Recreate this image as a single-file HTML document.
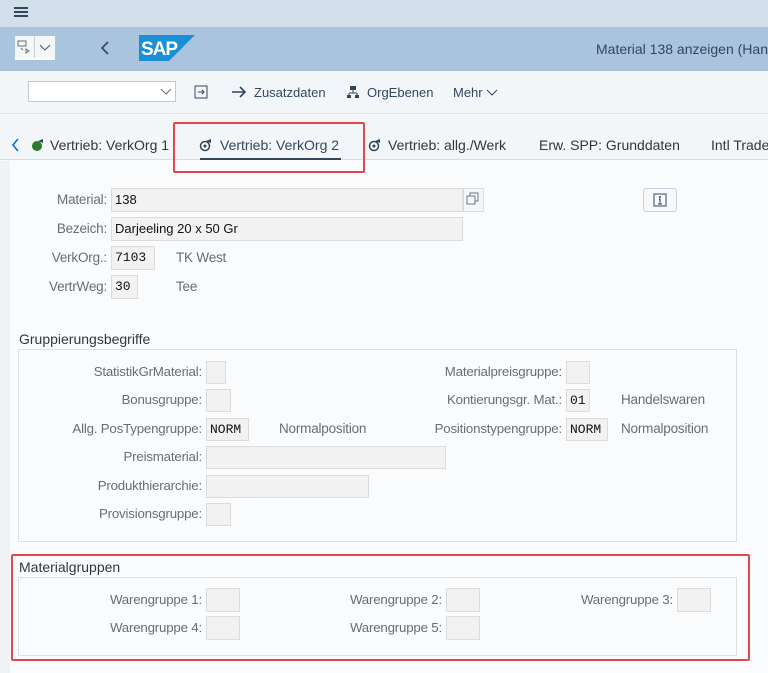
<!DOCTYPE html>
<html><head><meta charset="utf-8"><style>
*{box-sizing:border-box;margin:0;padding:0}
body{width:768px;height:673px;overflow:hidden;background:#fafbfd;font-family:"Liberation Sans",sans-serif;position:relative;color:#32363a}
.a{position:absolute;white-space:nowrap}
.lbl{position:absolute;font-size:13.3px;color:#6a6d70;text-align:right;letter-spacing:-0.2px;white-space:nowrap}
.top{font-size:13.5px;letter-spacing:-0.2px}
.in{position:absolute;background:#f2f2f2;border:1px solid #dcdcdc;font-family:"Liberation Mono",monospace;font-size:13px;color:#111;padding-left:3px;line-height:22px}
.txt{position:absolute;font-size:13.5px;color:#6a6d70;letter-spacing:-0.2px;white-space:nowrap}
</style></head><body>
<div class="a" style="left:0;top:0;width:768px;height:27px;background:#d2deea"></div>
<div class="a" style="left:14px;top:7px;width:14px;height:2px;background:#32475e;box-shadow:0 4px 0 #32475e,0 8px 0 #32475e"></div>
<div class="a" style="left:0;top:27px;width:768px;height:44px;background:#a9c4dc"></div>
<div class="a" style="left:15px;top:36px;width:40px;height:24px;background:#f4f6f8;border-bottom:2px solid #fff"></div>
<div class="a" style="left:34px;top:36px;width:1px;height:22px;background:#c8d0d8"></div>
<svg class="a" style="left:17px;top:40px" width="16" height="16"><rect x="1" y="1" width="8" height="5" fill="none" stroke="#6a6d70"/><path d="M4 8l2 2M9 9l3 2-3 2z" stroke="#6a6d70" fill="none"/></svg>
<svg class="a" style="left:39px;top:44px" width="12" height="8"><path d="M1 1l5 5 5-5" stroke="#556" fill="none"/></svg>
<svg class="a" style="left:100px;top:41px" width="10" height="14"><path d="M8 1L2 7l6 6" stroke="#32475e" stroke-width="1.6" fill="none"/></svg>
<svg class="a" style="left:139px;top:35px" width="56" height="26"><polygon points="0,0 56,0 30,26 0,26" fill="#1a8fd6"/><text x="2" y="20" font-family="Liberation Sans" font-weight="bold" font-size="19" fill="#fff" letter-spacing="-1">SAP</text></svg>
<div class="a" style="left:596px;top:41px;font-size:14px;color:#32475e">Material 138 anzeigen (Han</div>
<div class="a" style="left:0;top:71px;width:768px;height:43px;background:#f3f6f9;border-bottom:1px solid #dde2e8"></div>
<div class="a" style="left:28px;top:81px;width:148px;height:21px;background:#fff;border:1px solid #c4c9ce"></div>
<svg class="a" style="left:160px;top:88px" width="12" height="8"><path d="M1 1l5 5 5-5" stroke="#6a6d70" fill="none"/></svg>
<svg class="a" style="left:193px;top:84px" width="16" height="16"><rect x="2" y="2" width="12" height="12" fill="none" stroke="#32475e"/><path d="M5 8h6M9 6l2 2-2 2" stroke="#32475e" fill="none"/></svg>
<svg class="a" style="left:231px;top:86px" width="16" height="12"><path d="M1 6h13M9 1l5 5-5 5" stroke="#32475e" stroke-width="1.6" fill="none"/></svg>
<div class="a" style="left:254px;top:85px;font-size:13px;color:#32475e">Zusatzdaten</div>
<svg class="a" style="left:346px;top:85px" width="14" height="14"><rect x="4" y="1" width="6" height="4" fill="#32475e"/><path d="M7 5v3M3 8h8M3 8v2M11 8v2" stroke="#32475e"/><rect x="1" y="10" width="4" height="3" fill="#32475e"/><rect x="9" y="10" width="4" height="3" fill="#32475e"/></svg>
<div class="a" style="left:367px;top:85px;font-size:13px;color:#32475e">OrgEbenen</div>
<div class="a" style="left:453px;top:85px;font-size:13px;color:#32475e">Mehr</div>
<svg class="a" style="left:486px;top:89px" width="12" height="8"><path d="M1 1l5 5 5-5" stroke="#32475e" fill="none"/></svg>
<div class="a" style="left:0;top:115px;width:768px;height:45px;background:#f3f6f9;border-bottom:1px solid #d9dde2"></div>
<svg class="a" style="left:11px;top:138px" width="10" height="14"><path d="M7 1L2 7l5 6" stroke="#0a6ed1" stroke-width="1.6" fill="none"/></svg>
<svg class="a" style="left:31px;top:138px" width="14" height="14"><circle cx="6" cy="8" r="5" fill="#2b7d2b"/><path d="M7 3l5-2v4" fill="#32475e"/></svg>
<div class="a" style="left:50px;top:137px;font-size:14px;color:#32363a">Vertrieb: VerkOrg 1</div>
<svg class="a" style="left:199px;top:138px" width="14" height="14"><circle cx="6" cy="8" r="4.5" fill="none" stroke="#32475e" stroke-width="1.5"/><circle cx="6" cy="8" r="1.5" fill="#32475e"/><path d="M7 3l5-2v4" fill="#32475e"/></svg>
<div class="a" style="left:220px;top:137px;font-size:14px;color:#32475e">Vertrieb: VerkOrg 2</div>
<div class="a" style="left:200px;top:158px;width:141px;height:2px;background:#32475e"></div>
<svg class="a" style="left:368px;top:138px" width="14" height="14"><circle cx="6" cy="8" r="4.5" fill="none" stroke="#32475e" stroke-width="1.5"/><circle cx="6" cy="8" r="1.5" fill="#32475e"/><path d="M7 3l5-2v4" fill="#32475e"/></svg>
<div class="a" style="left:388px;top:137px;font-size:14px;color:#32363a">Vertrieb: allg./Werk</div>
<div class="a" style="left:539px;top:137px;font-size:14px;color:#32363a">Erw. SPP: Grunddaten</div>
<div class="a" style="left:711px;top:137px;font-size:14px;color:#32363a">Intl Trade</div>
<div class="a" style="left:173px;top:122px;width:192px;height:51px;border:2px solid #e0484e;border-radius:2px"></div>
<div class="a" style="left:0;top:161px;width:10px;height:512px;background:#f0f3f6"></div>

<div class="lbl top" style="right:661px;top:192px">Material:</div>
<div class="in" style="left:111px;top:188px;width:352px;height:24px;font-family:'Liberation Sans',sans-serif">138</div>
<div class="a" style="left:463px;top:188px;width:21px;height:24px;border:1px solid #dcdcdc;background:#f4f6f8"></div>
<svg class="a" style="left:466px;top:192px" width="14" height="14"><rect x="1" y="4" width="8" height="8" fill="none" stroke="#6a7a8a"/><path d="M4 4V1h8v8H9" fill="none" stroke="#6a7a8a"/></svg>
<div class="lbl top" style="right:661px;top:221px">Bezeich:</div>
<div class="in" style="left:111px;top:217px;width:352px;height:24px;font-family:'Liberation Sans',sans-serif">Darjeeling 20 x 50 Gr</div>
<div class="lbl top" style="right:661px;top:250px">VerkOrg.:</div>
<div class="in" style="left:111px;top:246px;width:44px;height:24px">7103</div>
<div class="txt" style="left:176px;top:250px">TK West</div>
<div class="lbl top" style="right:661px;top:279px">VertrWeg:</div>
<div class="in" style="left:111px;top:275px;width:27px;height:24px">30</div>
<div class="txt" style="left:176px;top:279px">Tee</div>
<div class="a" style="left:643px;top:188px;width:34px;height:24px;border:1px solid #ccd;border-radius:3px;background:#f7f8fa"></div>
<svg class="a" style="left:653px;top:193px" width="14" height="14"><rect x="1" y="1" width="12" height="12" fill="none" stroke="#32475e"/><circle cx="7" cy="4" r="1" fill="#32475e"/><path d="M6 6h1v5M5 11h4" stroke="#32475e"/></svg>

<div class="a" style="left:19px;top:331px;font-size:14px;color:#32363a">Gruppierungsbegriffe</div>
<div class="a" style="left:18px;top:349px;width:719px;height:193px;border:1px solid #dcdfe3"></div>
<div class="lbl" style="right:566px;top:364px">StatistikGrMaterial:</div><div class="in" style="left:206px;top:361px;width:20px;height:23px"></div>
<div class="lbl" style="right:566px;top:392px">Bonusgruppe:</div><div class="in" style="left:206px;top:389px;width:25px;height:23px"></div>
<div class="lbl" style="right:566px;top:421px">Allg. PosTypengruppe:</div><div class="in" style="left:206px;top:418px;width:43px;height:23px">NORM</div>
<div class="txt" style="left:279px;top:421px">Normalposition</div>
<div class="lbl" style="right:566px;top:449px">Preismaterial:</div><div class="in" style="left:206px;top:446px;width:240px;height:23px"></div>
<div class="lbl" style="right:566px;top:478px">Produkthierarchie:</div><div class="in" style="left:206px;top:475px;width:163px;height:23px"></div>
<div class="lbl" style="right:566px;top:506px">Provisionsgruppe:</div><div class="in" style="left:206px;top:503px;width:25px;height:23px"></div>
<div class="lbl" style="right:206px;top:364px">Materialpreisgruppe:</div><div class="in" style="left:566px;top:361px;width:24px;height:23px"></div>
<div class="lbl" style="right:206px;top:392px">Kontierungsgr. Mat.:</div><div class="in" style="left:566px;top:389px;width:24px;height:23px">01</div>
<div class="txt" style="left:621px;top:392px">Handelswaren</div>
<div class="lbl" style="right:206px;top:421px">Positionstypengruppe:</div><div class="in" style="left:566px;top:418px;width:42px;height:23px">NORM</div>
<div class="txt" style="left:621px;top:421px">Normalposition</div>

<div class="a" style="left:19px;top:559px;font-size:14px;color:#32363a">Materialgruppen</div>
<div class="a" style="left:18px;top:577px;width:719px;height:79px;border:1px solid #dcdfe3"></div>
<div class="lbl" style="right:566px;top:592px">Warengruppe 1:</div><div class="in" style="left:206px;top:588px;width:34px;height:24px"></div>
<div class="lbl" style="right:326px;top:592px">Warengruppe 2:</div><div class="in" style="left:446px;top:588px;width:34px;height:24px"></div>
<div class="lbl" style="right:95px;top:592px">Warengruppe 3:</div><div class="in" style="left:677px;top:588px;width:34px;height:24px"></div>
<div class="lbl" style="right:566px;top:620px">Warengruppe 4:</div><div class="in" style="left:206px;top:616px;width:34px;height:24px"></div>
<div class="lbl" style="right:326px;top:620px">Warengruppe 5:</div><div class="in" style="left:446px;top:616px;width:34px;height:24px"></div>
<div class="a" style="left:11px;top:554px;width:739px;height:107px;border:2px solid #e0484e;border-radius:2px"></div>
</body></html>
